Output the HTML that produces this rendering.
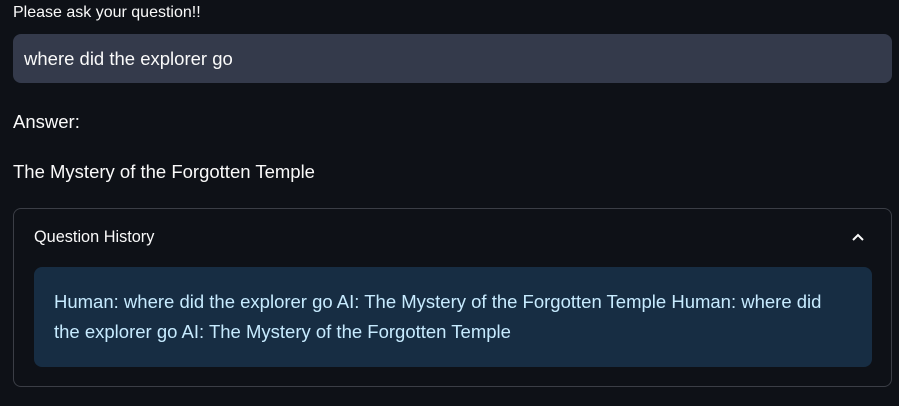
<!DOCTYPE html>
<html><head><style>
body{margin:0;width:899px;height:406px;background:#0e1117;font-family:"Liberation Sans",sans-serif;color:#fafafa;position:relative;overflow:hidden}
.a{position:absolute;white-space:nowrap}
</style></head><body>
<div class="a" style="left:13px;top:4px;font-size:16px">Please ask your question!!</div>
<div class="a" style="left:13px;top:34px;width:879px;height:49px;background:#343a4b;border-radius:8px"></div>
<div class="a" style="left:24px;top:48px;font-size:18.5px">where did the explorer go</div>
<div class="a" style="left:13px;top:111px;font-size:18.5px">Answer:</div>
<div class="a" style="left:13px;top:161px;font-size:18.5px">The Mystery of the Forgotten Temple</div>
<div class="a" style="left:13px;top:208px;width:877px;height:177px;border:1px solid #3b3e46;border-radius:8px"></div>
<div class="a" style="left:34px;top:228px;font-size:16.3px">Question History</div>
<svg class="a" style="left:851px;top:231px" width="14" height="12" viewBox="0 0 14 12"><path d="M2 9 L7 4 L12 9" stroke="#fafafa" stroke-width="2" fill="none"/></svg>
<div class="a" style="left:34px;top:267px;width:838px;height:100px;background:#172d43;border-radius:8px"></div>
<div class="a" style="left:54px;top:287px;font-size:18.5px;line-height:30px;color:#c7ebff">Human: where did the explorer go AI: The Mystery of the Forgotten Temple Human: where did<br>the explorer go AI: The Mystery of the Forgotten Temple</div>
</body></html>
